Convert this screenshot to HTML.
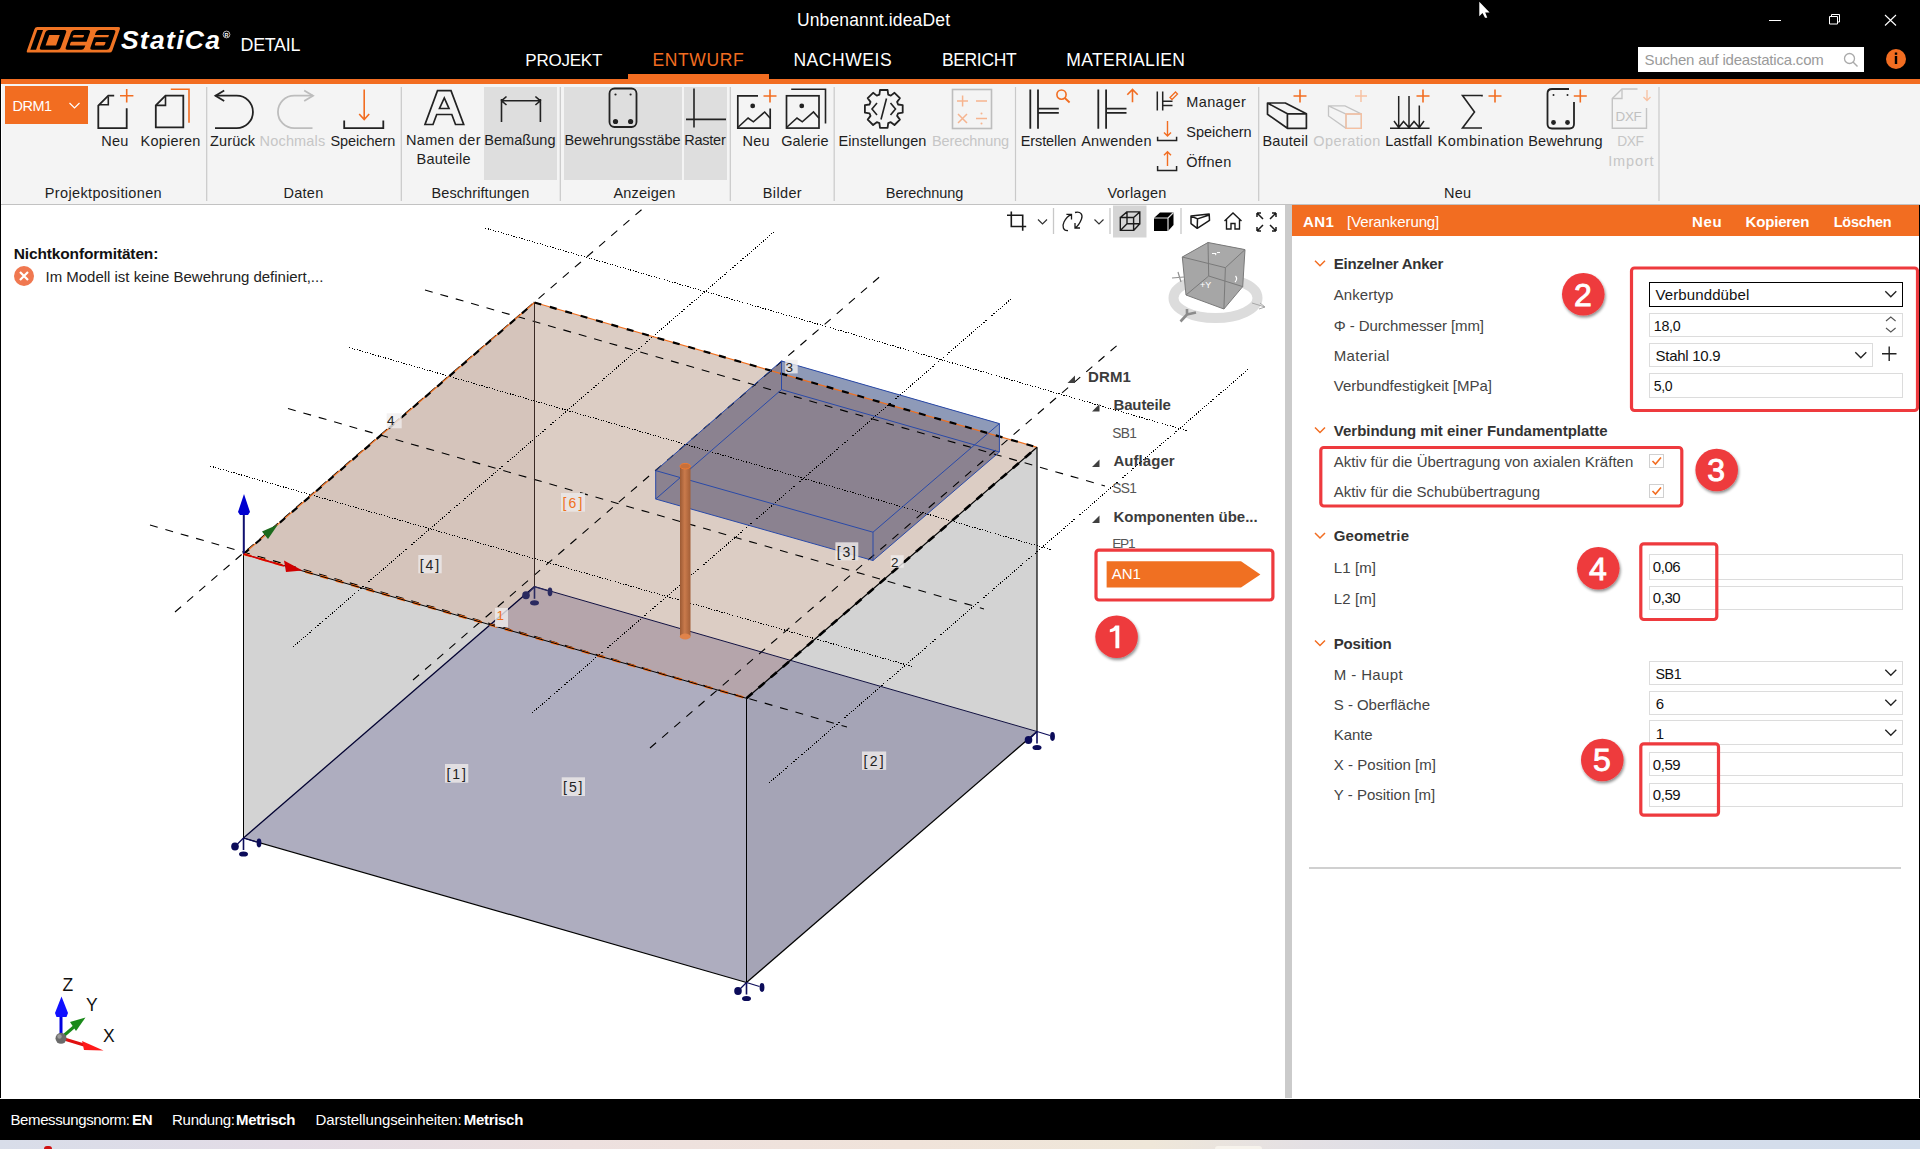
<!DOCTYPE html>
<html><head><meta charset="utf-8"><title>IDEA StatiCa Detail</title>
<style>
html,body{margin:0;padding:0;}
body{width:1920px;height:1149px;position:relative;overflow:hidden;background:#fff;font-family:'Liberation Sans', sans-serif;}
.a{position:absolute;}
.t{position:absolute;white-space:nowrap;line-height:1;font-family:'Liberation Sans', sans-serif;}
svg{position:absolute;left:0;top:0;}
</style></head><body>
<div class="a" style="left:0;top:0;width:1920px;height:79px;background:#000"></div><div class="a" style="left:0;top:79px;width:1920px;height:5px;background:#f26d21"></div><div class="a" style="left:628px;top:74px;width:141px;height:5px;background:#f26d21"></div><div class="a" style="left:0;top:84px;width:1920px;height:120px;background:#f4f4f4"></div><div class="a" style="left:0;top:204px;width:1920px;height:1px;background:#c2c2c2"></div><div class="a" style="left:1px;top:84px;width:1px;height:120px;background:#fff"></div><div class="a" style="left:484px;top:87px;width:73px;height:93px;background:#dedede"></div><div class="a" style="left:564px;top:87px;width:118px;height:93px;background:#dedede"></div><div class="a" style="left:684px;top:87px;width:43px;height:93px;background:#dedede"></div><div class="a" style="left:5px;top:86px;width:83px;height:38px;background:#f26d21"></div><div class="a" style="left:0;top:205px;width:1285px;height:893px;background:#fff;border-left:1px solid #000;box-sizing:border-box"></div><div class="a" style="left:1285px;top:205px;width:7px;height:893px;background:#cbcbcb"></div><div class="a" style="left:1292px;top:205px;width:627px;height:893px;background:#fff"></div><div class="a" style="left:1919px;top:205px;width:1px;height:893px;background:#000"></div><div class="a" style="left:1292px;top:205px;width:627px;height:31px;background:#f26d21"></div><div class="a" style="left:0;top:0;width:1px;height:1098px;background:#000"></div><div class="a" style="left:0;top:1099px;width:1920px;height:41px;background:#000"></div><div class="a" style="left:0;top:1140px;width:1920px;height:9px;background:linear-gradient(90deg,#d8dde9 0%,#e4dce6 15%,#ede0df 30%,#f0e3da 47%,#efe7d9 60%,#e4e0e4 68%,#d8dde9 78%,#d2ddec 100%)"></div><div class="a" style="left:1215px;top:1146px;width:47px;height:3px;border-radius:3px 3px 0 0;background:#f7f3ec"></div><div class="a" style="left:44px;top:1146px;width:8px;height:3px;border-radius:3px 3px 0 0;background:#d01010"></div><div class="a" style="left:1638px;top:47px;width:226px;height:25px;background:#fff"></div><div class="a" style="left:1649px;top:282px;width:254px;height:25px;border:1.5px solid #000;box-sizing:border-box;background:#fff"></div><div class="a" style="left:1649px;top:312.5px;width:254px;height:24.0px;border:1px solid #dcdcdc;box-sizing:border-box;background:#fff"></div><div class="a" style="left:1649px;top:342.5px;width:223.5px;height:24.0px;border:1px solid #dcdcdc;box-sizing:border-box;background:#fff"></div><div class="a" style="left:1649px;top:373px;width:254px;height:24.5px;border:1px solid #dcdcdc;box-sizing:border-box;background:#fff"></div><div class="a" style="left:1649px;top:554px;width:254px;height:25.5px;border:1px solid #dcdcdc;box-sizing:border-box;background:#fff"></div><div class="a" style="left:1649px;top:585.5px;width:254px;height:24.0px;border:1px solid #dcdcdc;box-sizing:border-box;background:#fff"></div><div class="a" style="left:1649px;top:660.5px;width:254px;height:24.0px;border:1px solid #dcdcdc;box-sizing:border-box;background:#fff"></div><div class="a" style="left:1649px;top:690.5px;width:254px;height:24.0px;border:1px solid #dcdcdc;box-sizing:border-box;background:#fff"></div><div class="a" style="left:1649px;top:720px;width:254px;height:24.5px;border:1px solid #dcdcdc;box-sizing:border-box;background:#fff"></div><div class="a" style="left:1649px;top:751.5px;width:254px;height:24.5px;border:1px solid #dcdcdc;box-sizing:border-box;background:#fff"></div><div class="a" style="left:1649px;top:782.5px;width:254px;height:24.5px;border:1px solid #dcdcdc;box-sizing:border-box;background:#fff"></div><div class="a" style="left:1649.3px;top:454px;width:14.700000000000045px;height:14px;border:1px solid #d0d0d0;box-sizing:border-box;background:#fff"></div><div class="a" style="left:1649.3px;top:484px;width:14.700000000000045px;height:14px;border:1px solid #d0d0d0;box-sizing:border-box;background:#fff"></div><div class="a" style="left:1309px;top:866.5px;width:592px;height:2px;background:#d0d0d0"></div>
<svg width="1920" height="1149" viewBox="0 0 1920 1149">
<defs><clipPath id="vp"><rect x="1" y="205" width="1284" height="893"/></clipPath><linearGradient id="rod" x1="0" x2="1" y1="0" y2="0"><stop offset="0" stop-color="#9c5a34"/><stop offset="0.45" stop-color="#c97a4c"/><stop offset="1" stop-color="#a35e36"/></linearGradient></defs><g clip-path="url(#vp)"><polygon points="243.5,554.0 534.5,302.5 534.5,586.5 490.4,624.6" fill="#d5c4bb"/><polygon points="534.5,302.5 1037.0,447.3 790.4,660.4 534.5,586.5" fill="#dccdc4"/><polygon points="490.4,624.6 534.5,586.5 790.4,660.4 746.5,698.3" fill="#b5a5ab"/><polygon points="243.5,554.0 490.4,624.6 243.5,838.0" fill="#d3d3d3"/><polygon points="790.4,660.4 1037.0,447.3 1037.0,731.5" fill="#d3d3d3"/><polygon points="490.4,624.6 746.5,698.3 746.5,982.5 243.5,838.0" fill="#aeadbf"/><polygon points="746.5,698.3 790.4,660.4 1037.0,731.5 746.5,982.5" fill="#a5a4b6"/><polygon points="781.5,361.0 999.4,423.6 999.4,452.0 873.0,560.5 655.7,499.0 655.7,470.6" fill="#8b8290"/><polygon points="781.5,361.0 999.4,423.6 999.4,436.3 781.5,373.4" fill="#8e9ab8"/><line x1="425" y1="290" x2="1105" y2="486" stroke="#000" stroke-width="1.1" stroke-dasharray="8 8"/><line x1="288" y1="408.5" x2="984" y2="609" stroke="#000" stroke-width="1.1" stroke-dasharray="8 8"/><line x1="150" y1="525" x2="847" y2="727" stroke="#000" stroke-width="1.1" stroke-dasharray="8 8"/><line x1="175" y1="612" x2="647" y2="205" stroke="#000" stroke-width="1.1" stroke-dasharray="8 8"/><line x1="413" y1="680" x2="884" y2="273" stroke="#000" stroke-width="1.1" stroke-dasharray="8 8"/><line x1="650" y1="748" x2="1121" y2="342" stroke="#000" stroke-width="1.1" stroke-dasharray="8 8"/><line x1="485" y1="228" x2="1188" y2="431" stroke="#000" stroke-width="1" stroke-dasharray="1.2 1.5" shape-rendering="crispEdges"/><line x1="349" y1="347.5" x2="1052" y2="550" stroke="#000" stroke-width="1" stroke-dasharray="1.2 1.5" shape-rendering="crispEdges"/><line x1="210" y1="466" x2="914" y2="667" stroke="#000" stroke-width="1" stroke-dasharray="1.2 1.5" shape-rendering="crispEdges"/><line x1="293" y1="647" x2="774" y2="232" stroke="#000" stroke-width="1" stroke-dasharray="1.2 1.5" shape-rendering="crispEdges"/><line x1="769" y1="783" x2="1248.5" y2="369" stroke="#000" stroke-width="1" stroke-dasharray="1.2 1.5" shape-rendering="crispEdges"/><line x1="532" y1="713" x2="1011" y2="299" stroke="#000" stroke-width="1" stroke-dasharray="1.2 1.5" shape-rendering="crispEdges"/><line x1="243.5" y1="554" x2="243.5" y2="838" stroke="#000" stroke-width="1"/><line x1="746.5" y1="698.3" x2="746.5" y2="982.5" stroke="#000" stroke-width="1"/><line x1="1037" y1="447.3" x2="1037" y2="731.5" stroke="#000" stroke-width="1.2"/><line x1="534.5" y1="302.5" x2="534.5" y2="586.5" stroke="#3a2a25" stroke-width="1"/><line x1="243.5" y1="838" x2="746.5" y2="982.5" stroke="#000" stroke-width="1.2"/><line x1="746.5" y1="982.5" x2="1037" y2="731.5" stroke="#000" stroke-width="1.2"/><line x1="243.5" y1="838" x2="534.5" y2="586.5" stroke="#000030" stroke-width="1.3"/><line x1="534.5" y1="586.5" x2="1037" y2="731.5" stroke="#101040" stroke-width="1"/><line x1="243.5" y1="554" x2="534.5" y2="302.5" stroke="#f07020" stroke-width="1.2"/><line x1="243.5" y1="554" x2="534.5" y2="302.5" stroke="#000" stroke-width="2.2" stroke-dasharray="7 9"/><line x1="534.5" y1="302.5" x2="1037" y2="447.3" stroke="#f07020" stroke-width="1.2"/><line x1="534.5" y1="302.5" x2="1037" y2="447.3" stroke="#000" stroke-width="2.2" stroke-dasharray="7 9"/><line x1="243.5" y1="554" x2="746.5" y2="698.3" stroke="#ff6a10" stroke-width="2.4" stroke-dasharray="8 8"/><line x1="243.5" y1="554" x2="746.5" y2="698.3" stroke="#000" stroke-width="1"/><line x1="746.5" y1="698.3" x2="1037" y2="447.3" stroke="#000" stroke-width="1.2"/><line x1="746.5" y1="698.3" x2="1037" y2="447.3" stroke="#000" stroke-width="2.6" stroke-dasharray="8 8"/><line x1="781.5" y1="361" x2="999.4" y2="423.6" stroke="#2a4aa8" stroke-width="1"/><line x1="999.4" y1="423.6" x2="873" y2="532.2" stroke="#2a4aa8" stroke-width="1"/><line x1="873" y1="532.2" x2="655.7" y2="470.6" stroke="#2a4aa8" stroke-width="1"/><line x1="655.7" y1="470.6" x2="781.5" y2="361" stroke="#2a4aa8" stroke-width="1"/><line x1="655.7" y1="499" x2="873" y2="560.5" stroke="#2a4aa8" stroke-width="1"/><line x1="873" y1="560.5" x2="999.4" y2="452" stroke="#2a4aa8" stroke-width="1"/><line x1="781.5" y1="389.6" x2="999.4" y2="452" stroke="#2a4aa8" stroke-width="1"/><line x1="781.5" y1="389.6" x2="655.7" y2="499" stroke="#2a4aa8" stroke-width="1"/><line x1="781.5" y1="361" x2="781.5" y2="389.6" stroke="#2a4aa8" stroke-width="1"/><line x1="999.4" y1="423.6" x2="999.4" y2="452" stroke="#2a4aa8" stroke-width="1"/><line x1="873" y1="532.2" x2="873" y2="560.5" stroke="#2a4aa8" stroke-width="1"/><line x1="655.7" y1="470.6" x2="655.7" y2="499" stroke="#2a4aa8" stroke-width="1"/><rect x="680" y="466" width="10.5" height="170" fill="url(#rod)"/><ellipse cx="685.2" cy="636.5" rx="5.4" ry="3" fill="#e0834a"/><ellipse cx="685.2" cy="466.2" rx="5.2" ry="2.8" fill="#c8703a" stroke="#f07a30" stroke-width="1"/><line x1="243.5" y1="838" x2="243.5" y2="850" stroke="#0c0c5a" stroke-width="1.6"/><ellipse cx="243.5" cy="854" rx="4.5" ry="2.6" fill="#0c0c5a"/><line x1="243.5" y1="838" x2="237.5" y2="844" stroke="#0c0c5a" stroke-width="1.2"/><ellipse cx="235.0" cy="846.5" rx="3.8" ry="4" fill="#0c0c5a"/><line x1="243.5" y1="838" x2="256.5" y2="842" stroke="#0c0c5a" stroke-width="1.2"/><ellipse cx="259.0" cy="843" rx="2.4" ry="4.4" fill="#0c0c5a"/><line x1="746.5" y1="982.5" x2="746.5" y2="994.5" stroke="#0c0c5a" stroke-width="1.6"/><ellipse cx="746.5" cy="998.5" rx="4.5" ry="2.6" fill="#0c0c5a"/><line x1="746.5" y1="982.5" x2="740.5" y2="988.5" stroke="#0c0c5a" stroke-width="1.2"/><ellipse cx="738.0" cy="991.0" rx="3.8" ry="4" fill="#0c0c5a"/><line x1="746.5" y1="982.5" x2="759.5" y2="986.5" stroke="#0c0c5a" stroke-width="1.2"/><ellipse cx="762.0" cy="987.5" rx="2.4" ry="4.4" fill="#0c0c5a"/><line x1="1037" y1="731.5" x2="1037" y2="743.5" stroke="#0c0c5a" stroke-width="1.6"/><ellipse cx="1037" cy="747.5" rx="4.5" ry="2.6" fill="#0c0c5a"/><line x1="1037" y1="731.5" x2="1031" y2="737.5" stroke="#0c0c5a" stroke-width="1.2"/><ellipse cx="1028.5" cy="740.0" rx="3.8" ry="4" fill="#0c0c5a"/><line x1="1037" y1="731.5" x2="1050" y2="735.5" stroke="#0c0c5a" stroke-width="1.2"/><ellipse cx="1052.5" cy="736.5" rx="2.4" ry="4.4" fill="#0c0c5a"/><line x1="534.5" y1="586.8" x2="534.5" y2="598.8" stroke="#2a2a60" stroke-width="1.6"/><ellipse cx="534.5" cy="602.8" rx="4.5" ry="2.6" fill="#2a2a60"/><line x1="534.5" y1="586.8" x2="528.5" y2="592.8" stroke="#2a2a60" stroke-width="1.2"/><ellipse cx="526.0" cy="595.3" rx="3.8" ry="4" fill="#2a2a60"/><line x1="534.5" y1="586.8" x2="547.5" y2="590.8" stroke="#2a2a60" stroke-width="1.2"/><ellipse cx="550.0" cy="591.8" rx="2.4" ry="4.4" fill="#2a2a60"/><line x1="243.8" y1="514" x2="243.8" y2="554" stroke="#101070" stroke-width="2"/><polygon points="244,494 238,512 240,515 248,515 250,512" fill="#0000d0"/><polygon points="278,524.5 262,531.5 268,539" fill="#1c6a1c"/><polygon points="302.5,570.5 284,560.5 286,572" fill="#d00000"/><line x1="243.5" y1="554" x2="284" y2="566" stroke="#e00000" stroke-width="1.5"/><rect x="418.3" y="555" width="23.399999999999977" height="18.299999999999955" fill="#ebe8e8" fill-opacity="0.85"/><rect x="445" y="764" width="23.30000000000001" height="18.700000000000045" fill="#ebe8e8" fill-opacity="0.85"/><rect x="561.7" y="777.3" width="23.299999999999955" height="18.700000000000045" fill="#ebe8e8" fill-opacity="0.85"/><rect x="561" y="493" width="24" height="18.69999999999999" fill="#ebe8e8" fill-opacity="0.85"/><rect x="835.4" y="542.3" width="22.899999999999977" height="18.100000000000023" fill="#ebe8e8" fill-opacity="0.85"/><rect x="862" y="751.5" width="24.200000000000045" height="18.399999999999977" fill="#ebe8e8" fill-opacity="0.85"/><rect x="386.7" y="413.3" width="15.0" height="15.0" fill="#f0eded" fill-opacity="0.8"/><rect x="785.2" y="359.8" width="12.5" height="13.599999999999966" fill="#f0eded" fill-opacity="0.8"/><rect x="890.7" y="555.2" width="13.0" height="12.5" fill="#f0eded" fill-opacity="0.8"/><rect x="495" y="608" width="13" height="19" fill="#f0eded" fill-opacity="0.8"/><ellipse cx="1215.5" cy="298" rx="42" ry="20" fill="none" stroke="#dcdcdc" stroke-width="10"/><polygon points="1208.0,242.5 1245.0,249.6 1242.7,286.6 1223.9,309.0 1186.0,295.0 1182.3,257.0" fill="#a6a6a6"/><polygon points="1208.0,242.5 1245.0,249.6 1225.4,267.7 1182.3,257.0" fill="#a9a9a9"/><line x1="1208" y1="242.5" x2="1245" y2="249.6" stroke="#7a7a7a" stroke-width="1"/><line x1="1245" y1="249.6" x2="1225.4" y2="267.7" stroke="#7a7a7a" stroke-width="1"/><line x1="1225.4" y1="267.7" x2="1182.3" y2="257" stroke="#7a7a7a" stroke-width="1"/><line x1="1182.3" y1="257" x2="1208" y2="242.5" stroke="#7a7a7a" stroke-width="1"/><line x1="1182.3" y1="257" x2="1186" y2="295" stroke="#7a7a7a" stroke-width="1"/><line x1="1225.4" y1="267.7" x2="1223.9" y2="309" stroke="#7a7a7a" stroke-width="1"/><line x1="1245" y1="249.6" x2="1242.7" y2="286.6" stroke="#7a7a7a" stroke-width="1"/><line x1="1186" y1="295" x2="1223.9" y2="309" stroke="#7a7a7a" stroke-width="1"/><line x1="1223.9" y1="309" x2="1242.7" y2="286.6" stroke="#7a7a7a" stroke-width="1"/><line x1="1208" y1="242.5" x2="1208.7" y2="276" stroke="#7a7a7a" stroke-width="1"/><line x1="1208.7" y1="276" x2="1186" y2="295" stroke="#7a7a7a" stroke-width="1"/><line x1="1208.7" y1="276" x2="1242.7" y2="286.6" stroke="#7a7a7a" stroke-width="1"/><path d="M1180.5,321.5 L1187,314.5 M1187,314.5 L1187,309 M1187,314.5 L1196,312.5" stroke="#8c8c8c" stroke-width="2.6" fill="none"/><text x="1200" y="288" font-family="Liberation Sans" font-size="9" fill="#fff">+Y</text><path d="M1212,253.5 H1216 M1217,252.5 H1220 M1215,255 L1216.5,254" stroke="#fff" stroke-width="1" fill="none"/><path d="M1235.5,276 Q1238,279 1235,282" stroke="#fff" stroke-width="1.2" fill="none"/><path d="M1252,303 L1265,307 M1260,303 L1265,307 L1259,309" stroke="#a8a8a8" stroke-width="1" fill="none"/><path d="M1172,278 L1184,277 M1178,272 L1181,282" stroke="#909090" stroke-width="1.2" fill="none"/><line x1="61" y1="1038" x2="61" y2="1015" stroke="#0000e0" stroke-width="3"/><polygon points="61.5,996.5 55,1013 56.5,1017 66.5,1017 68,1013" fill="#1010ff"/><line x1="61" y1="1038" x2="75" y2="1026" stroke="#1a8a1a" stroke-width="3"/><polygon points="85.5,1017.5 70,1022 76,1031" fill="#1a8a1a"/><line x1="61" y1="1038" x2="84" y2="1045" stroke="#e01010" stroke-width="3"/><polygon points="103.5,1050.5 82,1041 84,1050" fill="#ff1a1a"/><circle cx="61" cy="1038.3" r="5.5" fill="#6a6a6a"/><circle cx="59.5" cy="1036.5" r="2.2" fill="#9a9a9a"/><circle cx="24" cy="276" r="10" fill="#f07850"/><path d="M20,272 L28,280 M28,272 L20,280" stroke="#fff" stroke-width="2.2"/><polygon points="1067.5,383 1075.0,383 1075.0,375.5" fill="#404040"/><polygon points="1092,411.6 1099.5,411.6 1099.5,404.1" fill="#404040"/><polygon points="1092,467 1099.5,467 1099.5,459.5" fill="#404040"/><polygon points="1092,523 1099.5,523 1099.5,515.5" fill="#404040"/><polygon points="1106.6,561.3 1241,561.3 1260.4,574.4 1241,587.5 1106.6,587.5" fill="#f07022"/><rect x="1113" y="205.5" width="33.5" height="32" fill="#d5d5d5"/><path d="M1007,215.2 H1022.7 V230.8 M1011.3,211.6 V226.5 H1026.2" stroke="#1a1a1a" stroke-width="1.6" fill="none"/><path d="M1038.0,219.5 L1042.5,224 L1047.0,219.5" stroke="#333" stroke-width="1.2" fill="none"/><path d="M1094.5,219.5 L1099,224 L1103.5,219.5" stroke="#333" stroke-width="1.2" fill="none"/><line x1="1053.5" y1="208" x2="1053.5" y2="234" stroke="#c8c8c8" stroke-width="1.3"/><line x1="1110" y1="208" x2="1110" y2="234" stroke="#c8c8c8" stroke-width="1.3"/><line x1="1181" y1="208" x2="1181" y2="234" stroke="#c8c8c8" stroke-width="1.3"/><path d="M1068,230.5 C1063,231 1062,226 1064,222 C1066,218 1068,216 1071.5,214.4 M1066.4,214.4 H1071.5 V219.5 M1075,212.5 C1081,211 1083,215 1081.5,219 C1080,223 1078,226 1075,228 M1075,223 V228 H1080" stroke="#1a1a1a" stroke-width="1.3" fill="none"/><path d="M1120.3,217.5 H1133.6 V230.4 H1120.3 Z M1127,211.9 H1139.8 V223.8 H1127 Z M1120.3,217.5 L1127,211.9 M1133.6,217.5 L1139.8,211.9 M1133.6,230.4 L1139.8,223.8 M1120.3,230.4 L1127,223.8" stroke="#1a1a1a" stroke-width="1.4" fill="none"/><path d="M1154,218 L1160,212.5 H1173.5 V225 L1168,231 H1154 Z" fill="#000"/><path d="M1154,218 H1168 V231 M1168,218 L1173.5,212.5" stroke="#ddd" stroke-width="1.2" fill="none"/><path d="M1191,216 L1209.2,214.1 L1209.5,220.3 L1197.2,228.3 L1191,223.6 Z M1191,216 L1197.5,218.9 L1209.2,215 M1197.5,218.9 L1197.2,228.3" stroke="#1a1a1a" stroke-width="1.5" fill="none" stroke-linejoin="round"/><path d="M1224.5,221 L1233,213 L1241.5,221 M1226.5,219 V229 H1231 V223.5 H1235 V229 H1239.5 V219" stroke="#1a1a1a" stroke-width="1.4" fill="none"/><path d="M1257,213 L1263,219 M1257,213 H1261 M1257,213 V217 M1276,213 L1270,219 M1276,213 H1272 M1276,213 V217 M1257,231 L1263,225 M1257,231 H1261 M1257,231 V227 M1276,231 L1270,225 M1276,231 H1272 M1276,231 V227" stroke="#1a1a1a" stroke-width="1.5" fill="none"/></g><g transform="translate(17.68,0) skewX(-19.5)"><rect x="27.1" y="27.1" width="85.4" height="25.5" rx="2.2" fill="#f07424"/><rect x="30.25" y="30" width="5.75" height="19.8" fill="#000"/><rect x="39.1" y="30" width="20.8" height="19.8" rx="2.5" fill="#000"/><rect x="44" y="34.9" width="10.5" height="10.5" fill="#f07424"/><rect x="64.9" y="30" width="18.8" height="19.8" rx="2.5" fill="#000"/><rect x="68" y="34.9" width="11" height="2.6" rx="1" fill="#f07424"/><rect x="68" y="41.7" width="18" height="3.7" rx="0.8" fill="#f07424"/><rect x="89.6" y="30" width="19.4" height="19.8" rx="2.5" fill="#000"/><rect x="85" y="34.9" width="18.7" height="2.3" fill="#f07424"/><rect x="93" y="42" width="10" height="3.4" rx="0.8" fill="#f07424"/></g><circle cx="226.5" cy="34.5" r="3.4" fill="none" stroke="#fff" stroke-width="0.7"/><text x="226.5" y="36.6" text-anchor="middle" font-family="Liberation Sans" font-size="5.5" font-weight="700" fill="#fff">R</text><line x1="1769" y1="20.5" x2="1781" y2="20.5" stroke="#fff" stroke-width="1"/><path d="M1829.5,16.5 H1837.5 V24 H1829.5 Z M1831.5,16.5 V14.5 H1839.5 V22 H1837.5" stroke="#fff" stroke-width="1" fill="none"/><path d="M1885,15 L1896,25.5 M1896,15 L1885,25.5" stroke="#fff" stroke-width="1.1"/><circle cx="1849.5" cy="58.5" r="5" fill="none" stroke="#aaa" stroke-width="1.3"/><line x1="1853" y1="62" x2="1857.5" y2="66.5" stroke="#aaa" stroke-width="1.4"/><circle cx="1896" cy="59" r="10" fill="#f26d21"/><rect x="1894.8" y="56" width="2.4" height="8" fill="#000"/><rect x="1894.8" y="52.5" width="2.4" height="2.3" fill="#000"/><path d="M69.5,103 L74.5,108 L79.5,103" stroke="#fff" stroke-width="1.2" fill="none"/><line x1="206.7" y1="87" x2="206.7" y2="201" stroke="#c9c9c9" stroke-width="1.2"/><line x1="401.3" y1="87" x2="401.3" y2="201" stroke="#c9c9c9" stroke-width="1.2"/><line x1="560.3" y1="87" x2="560.3" y2="201" stroke="#c9c9c9" stroke-width="1.2"/><line x1="730.3" y1="87" x2="730.3" y2="201" stroke="#c9c9c9" stroke-width="1.2"/><line x1="834.2" y1="87" x2="834.2" y2="201" stroke="#c9c9c9" stroke-width="1.2"/><line x1="1015.5" y1="87" x2="1015.5" y2="201" stroke="#c9c9c9" stroke-width="1.2"/><line x1="1258.7" y1="87" x2="1258.7" y2="201" stroke="#c9c9c9" stroke-width="1.2"/><line x1="1659" y1="87" x2="1659" y2="201" stroke="#c9c9c9" stroke-width="1.2"/><path d="M114.2,95.7 H108.3 L98.3,105.7 V128.2 H126.7 V108.2" stroke="#222" stroke-width="1.8" fill="none"/><path d="M108.3,96.5 V104.8 H99.2" stroke="#222" stroke-width="1.6" fill="none"/><path d="M126.7,89 V102.4 M120,95.7 H133.4" stroke="#f26d21" stroke-width="1.6" fill="none"/><path d="M165.5,95.7 L155.8,105.4 V127.3 H183.3 V95.7 Z" stroke="#222" stroke-width="1.8" fill="none"/><path d="M165.5,96 V105.4 H156" stroke="#222" stroke-width="1.6" fill="none"/><path d="M170.8,89.3 H189 V122.7" stroke="#f26d21" stroke-width="1.6" fill="none"/><path d="M215.5,95.7 H236.7 A16.25,16.25 0 0 1 236.7,128.2 H215" stroke="#222" stroke-width="1.8" fill="none"/><path d="M224.2,90.5 L215.5,95.7 L224.2,100.9" stroke="#222" stroke-width="1.8" fill="none"/><path d="M313,95.7 H294.2 A16.25,16.25 0 0 0 294.2,128.2 H312.5" stroke="#bdbdbd" stroke-width="1.8" fill="none"/><path d="M304.2,90.5 L313,95.7 L304.2,100.9" stroke="#bdbdbd" stroke-width="1.8" fill="none"/><path d="M364.2,89.5 V119.5 M359.2,114 L364.2,119.5 L369.2,114" stroke="#f26d21" stroke-width="1.6" fill="none"/><path d="M344.2,120.5 V128.2 H383.3 V120.5" stroke="#222" stroke-width="1.8" fill="none"/><path d="M437.5,90.7 H451 L463.7,124.5 H455.5 L451.8,114.5 H436.7 L433,124.5 H425 Z M439.5,108.5 H449 L444.3,98 Z" stroke="#222" stroke-width="1.7" fill="none" stroke-linejoin="miter"/><path d="M501.5,99 V122 M540.4,99 V122 M501.5,100.8 H540.4 M506.5,96.5 L501.5,100.8 L506.5,105 M535.4,96.5 L540.4,100.8 L535.4,105" stroke="#222" stroke-width="1.6" fill="none"/><rect x="609.5" y="88.5" width="27" height="38.5" rx="5" stroke="#222" stroke-width="1.8" fill="none"/><circle cx="615.5" cy="94.5" r="1.1" fill="#222"/><circle cx="630.6" cy="94.5" r="1.1" fill="#222"/><circle cx="615.5" cy="121.5" r="2.6" fill="#222"/><circle cx="630.6" cy="121.5" r="2.6" fill="#222"/><path d="M694,88.5 V127.5 M686,119.4 H726" stroke="#222" stroke-width="1.6" fill="none"/><path d="M758,95.8 H737.8 V128.1 H770.2 V108.5" stroke="#222" stroke-width="1.7" fill="none"/><path d="M737.8,127.5 L748.1,118 L753.4,121.8 L764.7,112 L770.2,118.2" stroke="#222" stroke-width="1.6" fill="none"/><circle cx="752.7" cy="105.9" r="2.4" fill="#222"/><path d="M770,89.5 V102.5 M763.5,96 H776.5" stroke="#f26d21" stroke-width="1.6" fill="none"/><rect x="786.5" y="95.8" width="32.5" height="32.3" stroke="#222" stroke-width="1.7" fill="none"/><path d="M786.5,127.5 L797,118 L802.3,121.8 L813.5,112 L819,118.2" stroke="#222" stroke-width="1.6" fill="none"/><circle cx="801.75" cy="105.9" r="2.4" fill="#222"/><path d="M791.2,89.3 H825.5 V123.6" stroke="#222" stroke-width="1.6" fill="none"/><polygon points="880.0,90.0 887.6,90.0 888.2,94.6 890.8,95.6 894.5,92.8 899.9,98.2 897.1,101.9 898.1,104.5 902.7,105.1 902.7,112.7 898.1,113.3 897.1,115.9 899.9,119.6 894.5,125.0 890.8,122.2 888.2,123.2 887.6,127.8 880.0,127.8 879.4,123.2 876.8,122.2 873.1,125.0 867.7,119.6 870.5,115.9 869.5,113.3 864.9,112.7 864.9,105.1 869.5,104.5 870.5,101.9 867.7,98.2 873.1,92.8 876.8,95.6 879.4,94.6" stroke="#222" stroke-width="1.8" fill="none" stroke-linejoin="round"/><path d="M877,103 L872,109 L877,115 M890.5,103 L895.5,109 L890.5,115 M886.5,98.5 L881,119.5" stroke="#222" stroke-width="1.6" fill="none"/><rect x="952.5" y="89.5" width="39" height="39" stroke="#bdbdbd" stroke-width="1.6" fill="none"/><path d="M962.6,95.5 V106.5 M957,101 H968 M976,101 H987 M958,114 L967,123 M967,114 L958,123 M976,118.5 H987" stroke="#f6b48f" stroke-width="1.5" fill="none"/><circle cx="981.5" cy="113.5" r="1" fill="#f6b48f"/><circle cx="981.5" cy="123.5" r="1" fill="#f6b48f"/><path d="M1030.3,89.4 V128.7 M1038,89.4 V128.7 M1038,108.6 H1058.8 M1038,112.8 H1058.8" stroke="#222" stroke-width="1.8" fill="none"/><circle cx="1061.5" cy="94.6" r="4.6" stroke="#f26d21" stroke-width="1.6" fill="none"/><path d="M1064.8,98 L1069.6,102.5" stroke="#f26d21" stroke-width="1.8" fill="none"/><path d="M1098.3,89.4 V128.7 M1106.1,89.4 V128.7 M1106.1,108.6 H1126.5 M1106.1,112.8 H1126.5" stroke="#222" stroke-width="1.8" fill="none"/><path d="M1132.5,89.5 V102.3 M1127.3,94.8 L1132.5,89.5 L1137.7,94.8" stroke="#f26d21" stroke-width="1.6" fill="none"/><path d="M1157.3,91.4 V110.4 M1162.7,91.4 V110.4 M1162.7,101.3 H1172.5 M1162.7,105.4 H1172.5" stroke="#222" stroke-width="1.5" fill="none"/><path d="M1170,97.5 L1175.5,92 L1177.5,94 L1172,99.5 Z" stroke="#f26d21" stroke-width="1.3" fill="none"/><path d="M1167.5,121 V136 M1164,132.5 L1167.5,136 L1171,132.5" stroke="#f26d21" stroke-width="1.4" fill="none"/><path d="M1157.6,136.8 V140.6 H1176.6 V136.8" stroke="#222" stroke-width="1.5" fill="none"/><path d="M1167.5,151.7 V165.9 M1164,155.2 L1167.5,151.7 L1171,155.2" stroke="#f26d21" stroke-width="1.4" fill="none"/><path d="M1157.6,165.9 V170.4 H1176.6 V165.9" stroke="#222" stroke-width="1.5" fill="none"/><path d="M1267.5,103 H1285.3 L1306.4,113.8 V128.3 H1287.4 L1267.5,114.3 Z M1267.5,103 L1287.4,113.8 H1306.4 M1287.4,113.8 V128.3" stroke="#222" stroke-width="1.7" fill="none" stroke-linejoin="round"/><path d="M1300,89.5 V102.5 M1293.5,96 H1306.5" stroke="#f26d21" stroke-width="1.6" fill="none"/><path d="M1328.5,105.8 H1345 L1361.3,114 V128.3 H1346 L1328.5,116 Z M1328.5,105.8 L1346,114 H1361.3 M1346,114 V128.3" stroke="#c4c4c4" stroke-width="1.3" fill="none"/><path d="M1346,114 H1361.3 V128.3 H1346 Z" stroke="#f7c0a0" stroke-width="1.3" fill="none"/><path d="M1361,90 V102 M1355,96 H1367" stroke="#f7c0a0" stroke-width="1.4" fill="none"/><path d="M1398.7,96 V127 M1409,96 V127 M1419.3,105.6 V127 M1390,128.3 H1429.6 M1394,121 L1398.7,127.5 L1403.5,121.5 L1409,127.5 L1414,121.5 L1419.3,127.5 L1424,121" stroke="#222" stroke-width="1.5" fill="none"/><path d="M1423,89.5 V102.5 M1416.5,96 H1429.5" stroke="#f26d21" stroke-width="1.6" fill="none"/><path d="M1482,96.5 V95.5 H1462.5 L1474.5,112 L1462.5,128 H1482" stroke="#222" stroke-width="1.6" fill="none"/><path d="M1495,89.5 V102.5 M1488.5,96 H1501.5" stroke="#f26d21" stroke-width="1.6" fill="none"/><path d="M1569,89 H1552 Q1547.5,89 1547.5,93.5 V124 Q1547.5,128.5 1552,128.5 H1569.5 Q1574,128.5 1574,124 V102" stroke="#222" stroke-width="1.8" fill="none"/><circle cx="1553.5" cy="95" r="1" fill="#222"/><circle cx="1567.5" cy="95" r="1" fill="#222"/><circle cx="1553.5" cy="122.5" r="2.4" fill="#222"/><circle cx="1567.5" cy="122.5" r="2.4" fill="#222"/><path d="M1580.3,89.5 V102.5 M1573.8,96 H1586.8" stroke="#f26d21" stroke-width="1.6" fill="none"/><path d="M1637.5,89 H1622 L1612.3,98.5 V128.3 H1646.5 V108" stroke="#c4c4c4" stroke-width="1.4" fill="none"/><path d="M1622,89.5 V98.5 H1612.5" stroke="#c4c4c4" stroke-width="1.3" fill="none"/><path d="M1647,90 V100.5 M1643.5,97 L1647,100.5 L1650.5,97" stroke="#f7c0a0" stroke-width="1.3" fill="none"/>
</svg>
<div class="t" style="left:796.9px;top:12.19px;font-size:17.50px;font-weight:400;font-style:normal;color:#ffffff;letter-spacing:0.143px;">Unbenannt.ideaDet</div><div class="t" style="left:525.3px;top:52.08px;font-size:17.03px;font-weight:400;font-style:normal;color:#ffffff;letter-spacing:-0.231px;">PROJEKT</div><div class="t" style="left:652.4px;top:51.69px;font-size:17.50px;font-weight:400;font-style:normal;color:#f26d21;letter-spacing:0.653px;">ENTWURF</div><div class="t" style="left:793.4px;top:51.69px;font-size:17.50px;font-weight:400;font-style:normal;color:#ffffff;letter-spacing:0.570px;">NACHWEIS</div><div class="t" style="left:941.9px;top:51.69px;font-size:17.50px;font-weight:400;font-style:normal;color:#ffffff;letter-spacing:-0.335px;">BERICHT</div><div class="t" style="left:1066.3px;top:51.69px;font-size:17.50px;font-weight:400;font-style:normal;color:#ffffff;letter-spacing:0.331px;">MATERIALIEN</div><div class="t" style="left:1644.6px;top:51.80px;font-size:15.00px;font-weight:400;font-style:normal;color:#9a9a9a;letter-spacing:-0.203px;">Suchen auf ideastatica.com</div><div class="t" style="left:240.5px;top:36.87px;font-size:17.88px;font-weight:400;font-style:normal;color:#ffffff;letter-spacing:-0.269px;">DETAIL</div><div class="t" style="left:120.9px;top:27.27px;font-size:26.50px;font-weight:700;font-style:italic;color:#ffffff;letter-spacing:1.301px;">StatiCa</div><div class="t" style="left:12.5px;top:98.75px;font-size:14.47px;font-weight:400;font-style:normal;color:#ffffff;letter-spacing:-0.482px;">DRM1</div><div class="t" style="left:101.3px;top:134.23px;font-size:14.50px;font-weight:400;font-style:normal;color:#1e1e1e;letter-spacing:0.175px;">Neu</div><div class="t" style="left:140.5px;top:134.23px;font-size:14.50px;font-weight:400;font-style:normal;color:#1e1e1e;letter-spacing:0.245px;">Kopieren</div><div class="t" style="left:210.1px;top:134.23px;font-size:14.50px;font-weight:400;font-style:normal;color:#1e1e1e;letter-spacing:0.106px;">Zurück</div><div class="t" style="left:259.6px;top:134.23px;font-size:14.50px;font-weight:400;font-style:normal;color:#c6c6c6;letter-spacing:0.170px;">Nochmals</div><div class="t" style="left:330.5px;top:134.23px;font-size:14.50px;font-weight:400;font-style:normal;color:#1e1e1e;letter-spacing:-0.067px;">Speichern</div><div class="t" style="left:405.9px;top:132.73px;font-size:14.50px;font-weight:400;font-style:normal;color:#1e1e1e;letter-spacing:0.366px;">Namen der</div><div class="t" style="left:416.5px;top:152.33px;font-size:14.50px;font-weight:400;font-style:normal;color:#1e1e1e;letter-spacing:0.222px;">Bauteile</div><div class="t" style="left:484.3px;top:132.73px;font-size:14.50px;font-weight:400;font-style:normal;color:#1e1e1e;letter-spacing:0.032px;">Bemaßung</div><div class="t" style="left:564.4px;top:132.73px;font-size:14.50px;font-weight:400;font-style:normal;color:#1e1e1e;letter-spacing:0.013px;">Bewehrungsstäbe</div><div class="t" style="left:684.3px;top:132.73px;font-size:14.50px;font-weight:400;font-style:normal;color:#1e1e1e;letter-spacing:-0.252px;">Raster</div><div class="t" style="left:742.4px;top:133.73px;font-size:14.50px;font-weight:400;font-style:normal;color:#1e1e1e;letter-spacing:0.275px;">Neu</div><div class="t" style="left:781.2px;top:133.73px;font-size:14.50px;font-weight:400;font-style:normal;color:#1e1e1e;letter-spacing:0.085px;">Galerie</div><div class="t" style="left:838.6px;top:133.73px;font-size:14.50px;font-weight:400;font-style:normal;color:#1e1e1e;letter-spacing:0.057px;">Einstellungen</div><div class="t" style="left:932.0px;top:133.73px;font-size:14.50px;font-weight:400;font-style:normal;color:#c6c6c6;letter-spacing:-0.116px;">Berechnung</div><div class="t" style="left:1020.7px;top:133.73px;font-size:14.50px;font-weight:400;font-style:normal;color:#1e1e1e;letter-spacing:-0.095px;">Erstellen</div><div class="t" style="left:1081.2px;top:133.73px;font-size:14.50px;font-weight:400;font-style:normal;color:#1e1e1e;letter-spacing:0.247px;">Anwenden</div><div class="t" style="left:1186.2px;top:95.43px;font-size:14.50px;font-weight:400;font-style:normal;color:#1e1e1e;letter-spacing:0.404px;">Manager</div><div class="t" style="left:1186.2px;top:125.23px;font-size:14.50px;font-weight:400;font-style:normal;color:#1e1e1e;letter-spacing:0.020px;">Speichern</div><div class="t" style="left:1186.2px;top:155.03px;font-size:14.50px;font-weight:400;font-style:normal;color:#1e1e1e;letter-spacing:0.376px;">Öffnen</div><div class="t" style="left:1262.4px;top:134.43px;font-size:14.50px;font-weight:400;font-style:normal;color:#1e1e1e;letter-spacing:0.203px;">Bauteil</div><div class="t" style="left:1313.2px;top:134.43px;font-size:14.50px;font-weight:400;font-style:normal;color:#c6c6c6;letter-spacing:0.434px;">Operation</div><div class="t" style="left:1385.2px;top:134.43px;font-size:14.50px;font-weight:400;font-style:normal;color:#1e1e1e;letter-spacing:0.144px;">Lastfall</div><div class="t" style="left:1437.5px;top:134.43px;font-size:14.50px;font-weight:400;font-style:normal;color:#1e1e1e;letter-spacing:0.545px;">Kombination</div><div class="t" style="left:1528.3px;top:134.43px;font-size:14.50px;font-weight:400;font-style:normal;color:#1e1e1e;letter-spacing:0.100px;">Bewehrung</div><div class="t" style="left:1617.3px;top:135.06px;font-size:13.76px;font-weight:400;font-style:normal;color:#c6c6c6;letter-spacing:-0.456px;">DXF</div><div class="t" style="left:1608.2px;top:153.73px;font-size:14.50px;font-weight:400;font-style:normal;color:#c6c6c6;letter-spacing:0.873px;">Import</div><div class="t" style="left:1615.6px;top:110.35px;font-size:13.40px;font-weight:400;font-style:normal;color:#c0c0c0;letter-spacing:-0.368px;">DXF</div><div class="t" style="left:44.8px;top:186.03px;font-size:14.50px;font-weight:400;font-style:normal;color:#1e1e1e;letter-spacing:0.351px;">Projektpositionen</div><div class="t" style="left:283.5px;top:186.03px;font-size:14.50px;font-weight:400;font-style:normal;color:#1e1e1e;letter-spacing:0.264px;">Daten</div><div class="t" style="left:431.6px;top:186.03px;font-size:14.50px;font-weight:400;font-style:normal;color:#1e1e1e;letter-spacing:0.071px;">Beschriftungen</div><div class="t" style="left:613.4px;top:186.03px;font-size:14.50px;font-weight:400;font-style:normal;color:#1e1e1e;letter-spacing:0.213px;">Anzeigen</div><div class="t" style="left:762.8px;top:186.03px;font-size:14.50px;font-weight:400;font-style:normal;color:#1e1e1e;letter-spacing:0.366px;">Bilder</div><div class="t" style="left:885.8px;top:186.03px;font-size:14.50px;font-weight:400;font-style:normal;color:#1e1e1e;letter-spacing:-0.071px;">Berechnung</div><div class="t" style="left:1107.4px;top:186.03px;font-size:14.50px;font-weight:400;font-style:normal;color:#1e1e1e;letter-spacing:0.244px;">Vorlagen</div><div class="t" style="left:1444.0px;top:186.03px;font-size:14.50px;font-weight:400;font-style:normal;color:#1e1e1e;letter-spacing:0.225px;">Neu</div><div class="t" style="left:13.8px;top:246.18px;font-size:15.50px;font-weight:700;font-style:normal;color:#111;letter-spacing:-0.151px;">Nichtkonformitäten:</div><div class="t" style="left:45.5px;top:269.00px;font-size:15.00px;font-weight:400;font-style:normal;color:#222;letter-spacing:-0.016px;">Im Modell ist keine Bewehrung definiert,...</div><div class="t" style="left:1087.9px;top:369.30px;font-size:15.00px;font-weight:700;font-style:normal;color:#3c3c3c;letter-spacing:0.161px;">DRM1</div><div class="t" style="left:1113.5px;top:397.30px;font-size:15.00px;font-weight:700;font-style:normal;color:#3c3c3c;letter-spacing:-0.151px;">Bauteile</div><div class="t" style="left:1112.2px;top:426.96px;font-size:13.75px;font-weight:400;font-style:normal;color:#555;letter-spacing:-0.700px;">SB1</div><div class="t" style="left:1113.5px;top:453.30px;font-size:15.00px;font-weight:700;font-style:normal;color:#3c3c3c;letter-spacing:0.037px;">Auflager</div><div class="t" style="left:1112.2px;top:482.36px;font-size:13.75px;font-weight:400;font-style:normal;color:#555;letter-spacing:-0.700px;">SS1</div><div class="t" style="left:1113.5px;top:509.30px;font-size:15.00px;font-weight:700;font-style:normal;color:#3c3c3c;letter-spacing:0.002px;">Komponenten übe...</div><div class="t" style="left:1112.2px;top:537.40px;font-size:13.70px;font-weight:400;font-style:normal;color:#555;letter-spacing:-1.205px;">EP1</div><div class="t" style="left:1111.8px;top:566.10px;font-size:15.00px;font-weight:400;font-style:normal;color:#ffffff;letter-spacing:-0.094px;">AN1</div><div class="t" style="left:419.7px;top:557.65px;font-size:14.00px;font-weight:400;font-style:normal;color:#222;letter-spacing:1.971px;">[4]</div><div class="t" style="left:446.4px;top:766.65px;font-size:14.00px;font-weight:400;font-style:normal;color:#222;letter-spacing:1.921px;">[1]</div><div class="t" style="left:563.1px;top:779.95px;font-size:14.00px;font-weight:400;font-style:normal;color:#222;letter-spacing:1.921px;">[5]</div><div class="t" style="left:562.4px;top:495.65px;font-size:14.00px;font-weight:400;font-style:normal;color:#f07020;letter-spacing:2.271px;">[6]</div><div class="t" style="left:836.8px;top:544.95px;font-size:14.00px;font-weight:400;font-style:normal;color:#222;letter-spacing:1.721px;">[3]</div><div class="t" style="left:863.4px;top:754.15px;font-size:14.00px;font-weight:400;font-style:normal;color:#222;letter-spacing:2.371px;">[2]</div><div class="t" style="left:386.9px;top:414.37px;font-size:13.50px;font-weight:400;font-style:normal;color:#222;">4</div><div class="t" style="left:785.4px;top:360.87px;font-size:13.50px;font-weight:400;font-style:normal;color:#222;">3</div><div class="t" style="left:890.9px;top:556.27px;font-size:13.50px;font-weight:400;font-style:normal;color:#222;">2</div><div class="t" style="left:496.4px;top:609.07px;font-size:13.50px;font-weight:400;font-style:normal;color:#f07020;">1</div><div class="t" style="left:62.6px;top:976.89px;font-size:17.50px;font-weight:400;font-style:normal;color:#111;letter-spacing:1.697px;">Z</div><div class="t" style="left:85.9px;top:996.89px;font-size:17.50px;font-weight:400;font-style:normal;color:#111;letter-spacing:-0.287px;">Y</div><div class="t" style="left:102.9px;top:1027.89px;font-size:17.50px;font-weight:400;font-style:normal;color:#111;letter-spacing:0.412px;">X</div><div class="t" style="left:1302.9px;top:214.40px;font-size:15.00px;font-weight:700;font-style:normal;color:#ffffff;letter-spacing:0.492px;">AN1</div><div class="t" style="left:1347.1px;top:214.40px;font-size:15.00px;font-weight:400;font-style:normal;color:#ffffff;letter-spacing:-0.101px;">[Verankerung]</div><div class="t" style="left:1692.1px;top:214.40px;font-size:15.00px;font-weight:700;font-style:normal;color:#ffffff;letter-spacing:0.628px;">Neu</div><div class="t" style="left:1745.5px;top:214.40px;font-size:15.00px;font-weight:700;font-style:normal;color:#ffffff;letter-spacing:-0.174px;">Kopieren</div><div class="t" style="left:1833.8px;top:214.89px;font-size:14.43px;font-weight:700;font-style:normal;color:#ffffff;letter-spacing:-0.248px;">Löschen</div><div class="t" style="left:1333.8px;top:256.30px;font-size:15.00px;font-weight:700;font-style:normal;color:#333;letter-spacing:-0.238px;">Einzelner Anker</div><div class="t" style="left:1333.8px;top:423.00px;font-size:15.00px;font-weight:700;font-style:normal;color:#333;letter-spacing:-0.009px;">Verbindung mit einer Fundamentplatte</div><div class="t" style="left:1333.8px;top:528.00px;font-size:15.00px;font-weight:700;font-style:normal;color:#333;letter-spacing:0.125px;">Geometrie</div><div class="t" style="left:1333.8px;top:635.60px;font-size:15.00px;font-weight:700;font-style:normal;color:#333;letter-spacing:-0.182px;">Position</div><div class="t" style="left:1333.8px;top:287.30px;font-size:15.00px;font-weight:400;font-style:normal;color:#444;letter-spacing:0.042px;">Ankertyp</div><div class="t" style="left:1333.8px;top:318.30px;font-size:15.00px;font-weight:400;font-style:normal;color:#444;letter-spacing:-0.094px;">Φ - Durchmesser [mm]</div><div class="t" style="left:1333.8px;top:348.30px;font-size:15.00px;font-weight:400;font-style:normal;color:#444;letter-spacing:0.306px;">Material</div><div class="t" style="left:1333.8px;top:378.30px;font-size:15.00px;font-weight:400;font-style:normal;color:#444;letter-spacing:-0.011px;">Verbundfestigkeit [MPa]</div><div class="t" style="left:1333.8px;top:454.00px;font-size:15.00px;font-weight:400;font-style:normal;color:#444;letter-spacing:0.023px;">Aktiv für die Übertragung von axialen Kräften</div><div class="t" style="left:1333.8px;top:484.00px;font-size:15.00px;font-weight:400;font-style:normal;color:#444;letter-spacing:0.008px;">Aktiv für die Schubübertragung</div><div class="t" style="left:1333.8px;top:559.60px;font-size:15.00px;font-weight:400;font-style:normal;color:#444;letter-spacing:0.103px;">L1 [m]</div><div class="t" style="left:1333.8px;top:590.60px;font-size:15.00px;font-weight:400;font-style:normal;color:#444;letter-spacing:0.103px;">L2 [m]</div><div class="t" style="left:1333.8px;top:666.60px;font-size:15.00px;font-weight:400;font-style:normal;color:#444;letter-spacing:0.380px;">M - Haupt</div><div class="t" style="left:1333.8px;top:696.60px;font-size:15.00px;font-weight:400;font-style:normal;color:#444;letter-spacing:-0.040px;">S - Oberfläche</div><div class="t" style="left:1333.8px;top:726.60px;font-size:15.00px;font-weight:400;font-style:normal;color:#444;letter-spacing:-0.076px;">Kante</div><div class="t" style="left:1333.8px;top:756.60px;font-size:15.00px;font-weight:400;font-style:normal;color:#444;letter-spacing:0.033px;">X - Position [m]</div><div class="t" style="left:1333.8px;top:787.30px;font-size:15.00px;font-weight:400;font-style:normal;color:#444;letter-spacing:0.004px;">Y - Position [m]</div><div class="t" style="left:1655.5px;top:287.30px;font-size:15.00px;font-weight:400;font-style:normal;color:#111;letter-spacing:0.110px;">Verbunddübel</div><div class="t" style="left:1653.8px;top:318.94px;font-size:14.25px;font-weight:400;font-style:normal;color:#111;letter-spacing:-0.299px;">18,0</div><div class="t" style="left:1655.5px;top:348.30px;font-size:15.00px;font-weight:400;font-style:normal;color:#111;letter-spacing:-0.262px;">Stahl 10.9</div><div class="t" style="left:1653.8px;top:379.08px;font-size:14.08px;font-weight:400;font-style:normal;color:#111;letter-spacing:-0.380px;">5,0</div><div class="t" style="left:1652.8px;top:559.30px;font-size:15.00px;font-weight:400;font-style:normal;color:#111;letter-spacing:-0.434px;">0,06</div><div class="t" style="left:1652.8px;top:590.30px;font-size:15.00px;font-weight:400;font-style:normal;color:#111;letter-spacing:-0.434px;">0,30</div><div class="t" style="left:1655.5px;top:666.92px;font-size:14.27px;font-weight:400;font-style:normal;color:#111;letter-spacing:-0.421px;">SB1</div><div class="t" style="left:1655.8px;top:696.30px;font-size:15.00px;font-weight:400;font-style:normal;color:#111;">6</div><div class="t" style="left:1655.8px;top:726.30px;font-size:15.00px;font-weight:400;font-style:normal;color:#111;">1</div><div class="t" style="left:1652.8px;top:756.80px;font-size:15.00px;font-weight:400;font-style:normal;color:#111;letter-spacing:-0.434px;">0,59</div><div class="t" style="left:1652.8px;top:787.30px;font-size:15.00px;font-weight:400;font-style:normal;color:#111;letter-spacing:-0.434px;">0,59</div><div class="t" style="left:10.5px;top:1112.30px;font-size:15.00px;font-weight:400;font-style:normal;color:#ffffff;letter-spacing:-0.397px;">Bemessungsnorm:</div><div class="t" style="left:132.1px;top:1112.30px;font-size:15.00px;font-weight:700;font-style:normal;color:#ffffff;letter-spacing:-0.244px;">EN</div><div class="t" style="left:172.1px;top:1112.30px;font-size:15.00px;font-weight:400;font-style:normal;color:#ffffff;letter-spacing:-0.309px;">Rundung:</div><div class="t" style="left:236.1px;top:1112.30px;font-size:15.00px;font-weight:700;font-style:normal;color:#ffffff;letter-spacing:-0.355px;">Metrisch</div><div class="t" style="left:315.5px;top:1112.30px;font-size:15.00px;font-weight:400;font-style:normal;color:#ffffff;letter-spacing:-0.107px;">Darstellungseinheiten:</div><div class="t" style="left:463.8px;top:1112.30px;font-size:15.00px;font-weight:700;font-style:normal;color:#ffffff;letter-spacing:-0.312px;">Metrisch</div>
<svg width="1920" height="1149" viewBox="0 0 1920 1149">
<path d="M1885.3,291.25 L1890.8,296.75 L1896.3,291.25" stroke="#222" stroke-width="1.3" fill="none"/><path d="M1885.3,669.75 L1890.8,675.25 L1896.3,669.75" stroke="#222" stroke-width="1.3" fill="none"/><path d="M1885.3,699.75 L1890.8,705.25 L1896.3,699.75" stroke="#222" stroke-width="1.3" fill="none"/><path d="M1885.3,729.75 L1890.8,735.25 L1896.3,729.75" stroke="#222" stroke-width="1.3" fill="none"/><path d="M1855.3,352.25 L1860.8,357.75 L1866.3,352.25" stroke="#222" stroke-width="1.3" fill="none"/><path d="M1882,353.7 H1896.5 M1889.2,346.5 V361" stroke="#222" stroke-width="1.4"/><path d="M1886,321 L1890.8,317 L1895.6,321 M1886,328 L1890.8,332 L1895.6,328" stroke="#555" stroke-width="1.1" fill="none"/><path d="M1315,260.8 L1320,265.8 L1325,260.8" stroke="#f26d21" stroke-width="1.5" fill="none"/><path d="M1315,427.5 L1320,432.5 L1325,427.5" stroke="#f26d21" stroke-width="1.5" fill="none"/><path d="M1315,533.0 L1320,538.0 L1325,533.0" stroke="#f26d21" stroke-width="1.5" fill="none"/><path d="M1315,640.5 L1320,645.5 L1325,640.5" stroke="#f26d21" stroke-width="1.5" fill="none"/><path d="M1652.5,461 L1655.5,464 L1661,457.5" stroke="#f26d21" stroke-width="1.6" fill="none"/><path d="M1652.5,491 L1655.5,494 L1661,487.5" stroke="#f26d21" stroke-width="1.6" fill="none"/><defs><filter id="sh" x="-30%" y="-30%" width="160%" height="160%"><feGaussianBlur in="SourceAlpha" stdDeviation="1.5"/><feOffset dx="0.5" dy="1.5"/><feComponentTransfer><feFuncA type="linear" slope="0.45"/></feComponentTransfer><feMerge><feMergeNode/><feMergeNode in="SourceGraphic"/></feMerge></filter></defs><rect x="1096.0" y="550.1" width="176.9000000000001" height="49.89999999999998" rx="3" fill="none" stroke="#ee3a3e" stroke-width="3.2"/><rect x="1631.5" y="268.0" width="286" height="142.5" rx="3" fill="none" stroke="#ee3a3e" stroke-width="3.2"/><rect x="1320.8" y="447.5" width="361.0" height="58.5" rx="3" fill="none" stroke="#ee3a3e" stroke-width="3.2"/><rect x="1640.8" y="543.8" width="76.0" height="75.70000000000005" rx="3" fill="none" stroke="#ee3a3e" stroke-width="3.2"/><rect x="1640.8" y="743.8" width="77.70000000000005" height="71.40000000000009" rx="3" fill="none" stroke="#ee3a3e" stroke-width="3.2"/><circle cx="1116.6" cy="636.8" r="21.3" fill="#ee3a3e" filter="url(#sh)"/><circle cx="1583.3" cy="294.3" r="21.3" fill="#ee3a3e" filter="url(#sh)"/><circle cx="1716.7" cy="470" r="21.3" fill="#ee3a3e" filter="url(#sh)"/><circle cx="1598.3" cy="568.3" r="21.3" fill="#ee3a3e" filter="url(#sh)"/><circle cx="1602.3" cy="760" r="21.3" fill="#ee3a3e" filter="url(#sh)"/><path d="M1115.4,625.6 H1119.3 V648.3 H1115.4 V630.6 Q1113,632 1109.8,632.3 V629.4 Q1113.8,628.6 1115.4,625.6 Z" fill="#fff"/><text x="1582.8" y="305.5" text-anchor="middle" font-family="Liberation Sans" font-weight="400" font-size="32" fill="#fff" stroke="#fff" stroke-width="0.9">2</text><text x="1716.2" y="481.2" text-anchor="middle" font-family="Liberation Sans" font-weight="400" font-size="32" fill="#fff" stroke="#fff" stroke-width="0.9">3</text><text x="1597.8" y="579.5" text-anchor="middle" font-family="Liberation Sans" font-weight="400" font-size="32" fill="#fff" stroke="#fff" stroke-width="0.9">4</text><text x="1601.8" y="771.2" text-anchor="middle" font-family="Liberation Sans" font-weight="400" font-size="32" fill="#fff" stroke="#fff" stroke-width="0.9">5</text><path d="M1479.3,1.8 V16.2 L1482.5,13 L1485,17.8 L1487.3,17.8 L1485.2,12.4 H1489.6 Z" fill="#fff"/>
</svg>
</body></html>
